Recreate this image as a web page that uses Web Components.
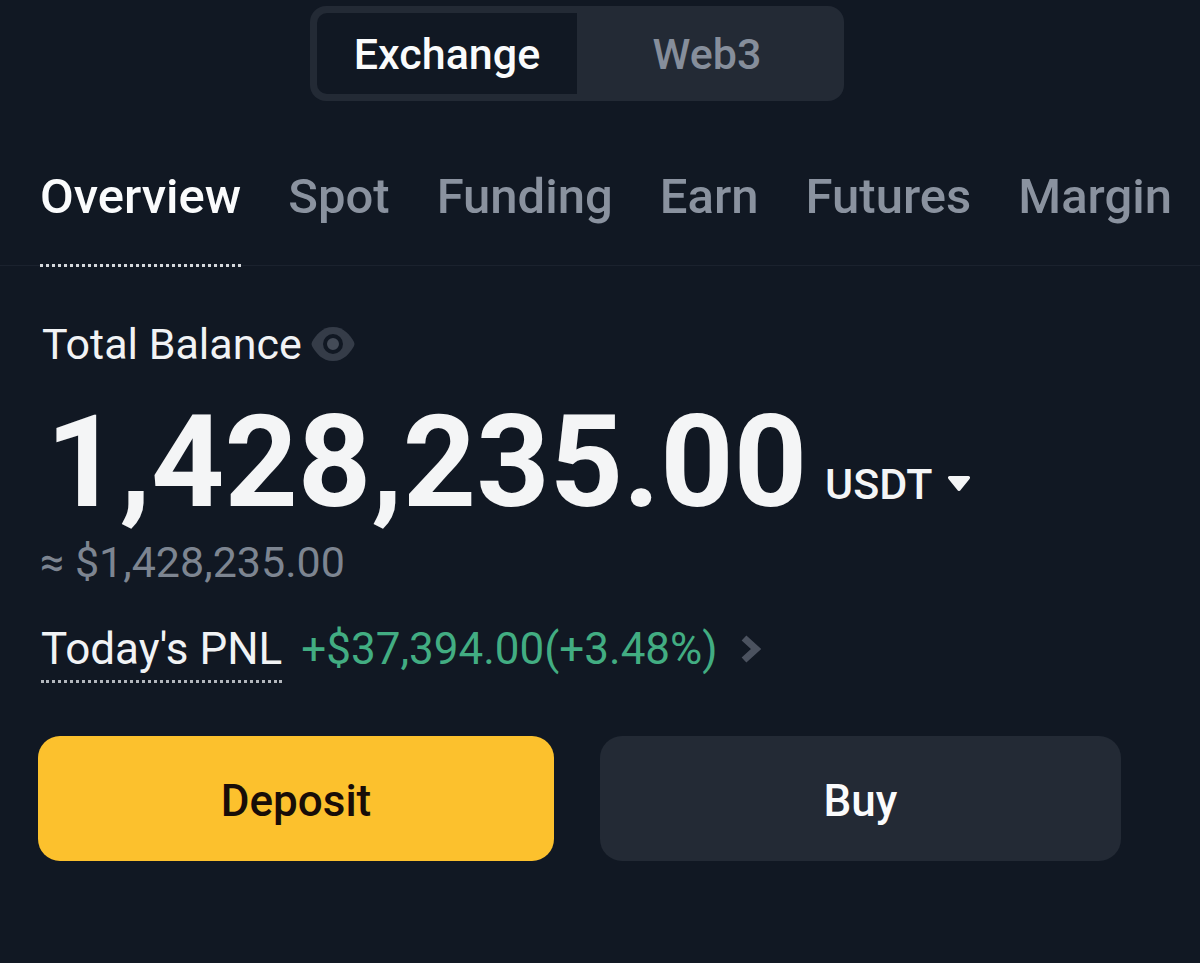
<!DOCTYPE html>
<html lang="en">
<head>
<meta charset="utf-8">
<meta name="viewport" content="width=device-width, initial-scale=1">
<title>Wallet Overview</title>
<style>
  html { background: #111823; }
  body { margin: 0; font-family: Roboto, "Liberation Sans", sans-serif; color: #f1f3f5; }
</style>
</head>
<body>
<wallet-page>
  <segment-switch slot="switch">
    <segment-item active>Exchange</segment-item>
    <segment-item>Web3</segment-item>
  </segment-switch>
  <tab-bar slot="tabs">
    <tab-link active>Overview</tab-link>
    <tab-link>Spot</tab-link>
    <tab-link>Funding</tab-link>
    <tab-link>Earn</tab-link>
    <tab-link>Futures</tab-link>
    <tab-link>Margin</tab-link>
  </tab-bar>
  <balance-summary>
    <span slot="label">Total Balance</span>
    <span slot="amount">1,428,235.00</span>
    <currency-select slot="currency"></currency-select>
    <span slot="fiat">≈ $1,428,235.00</span>
  </balance-summary>
  <pnl-row>
    <span slot="label">Today's PNL</span>
    <span slot="value">+$37,394.00(+3.48%)</span>
  </pnl-row>
  <action-row>
    <action-button variant="primary">Deposit</action-button>
    <action-button>Buy</action-button>
  </action-row>
</wallet-page>

<script>
  const define = (name, html) => {
    const template = document.createElement('template');
    template.innerHTML = html;
    customElements.define(name, class extends HTMLElement {
      constructor() {
        super();
        this.attachShadow({ mode: 'open' }).append(template.content.cloneNode(true));
      }
    });
  };

  define('wallet-page', `
    <style>
      :host { display: block; padding: 6px 0 101px; }
      header { display: flex; justify-content: center; padding: 0 84px 0 38px; }
      nav { margin-top: 60px; }
      main { padding: 50px 79px 0 38px; }
    </style>
    <header><slot name="switch"></slot></header>
    <nav aria-label="Wallet sections"><slot name="tabs"></slot></nav>
    <main><slot></slot></main>`);

  define('segment-switch', `
    <style>
      :host { display: grid; grid-template-columns: 1fr 1fr; flex: 0 1 534px; box-sizing: border-box;
              padding: 7px; border-radius: 16px; background: #232a35; }
    </style>
    <slot></slot>`);

  define('segment-item', `
    <style>
      :host { display: block; }
      button { width: 100%; height: 81px; padding: 0; border: 0; background: none; border-radius: 10px 0 0 10px;
               font: 500 43px/56px Roboto, "Liberation Sans", sans-serif; color: #868e9b; cursor: pointer; }
      :host([active]) button { background: #111823; color: #fafbfc; }
    </style>
    <button type="button"><slot></slot></button>`);

  define('tab-bar', `
    <style>
      :host { display: flex; justify-content: space-between; padding: 0 28px 0 40px; border-bottom: 1px solid #1b222e; }
    </style>
    <slot></slot>`);

  define('tab-link', `
    <style>
      :host { display: block; margin-bottom: -2px; }
      a { display: block; padding-bottom: 31px; border-bottom: 3px dotted transparent;
          font-size: 49px; font-weight: 500; line-height: 72px; color: #8a929f; text-decoration: none; white-space: nowrap; }
      :host([active]) a { color: #fafbfc; border-color: #d5d8dc; }
    </style>
    <a href="#"><slot></slot></a>`);

  define('balance-summary', `
    <style>
      :host { display: block; }
      .label { display: flex; align-items: center; gap: 9px; padding-left: 4px; font-size: 43px; line-height: 56px; }
      button { display: flex; padding: 0; border: 0; background: none; cursor: pointer; }
      .total { display: flex; align-items: flex-end; gap: 18px; margin-top: 30px; padding-left: 8px; }
      .amount { font-size: 128px; font-weight: 700; line-height: 120px; color: #f4f5f6; }
      .fiat { margin-top: 12px; padding-left: 2px; font-size: 43px; line-height: 56px; color: #7d8591; }
    </style>
    <div class="label">
      <slot name="label"></slot>
      <button type="button" aria-label="Hide balance">
        <svg width="44" height="34" viewBox="0 0 44 34" aria-hidden="true">
          <path d="M22 0C33 0 39 8 43 15Q44 17 43 19C39 26 33 34 22 34S5 26 1 19Q0 17 1 15C5 8 11 0 22 0Z" fill="#353c48"/>
          <circle cx="22" cy="17" r="8" fill="#444b57" stroke="#111823" stroke-width="4"/>
        </svg>
      </button>
    </div>
    <div class="total">
      <span class="amount"><slot name="amount"></slot></span>
      <slot name="currency"></slot>
    </div>
    <div class="fiat"><slot name="fiat"></slot></div>`);

  define('currency-select', `
    <style>
      :host { display: inline-grid; align-items: center; padding-bottom: 10px; }
      select { grid-area: 1 / 1; appearance: none; margin: 0; padding: 0 38px 0 0; border: 0; background: none;
               font: 500 43px/56px Roboto, "Liberation Sans", sans-serif; color: #f4f5f6; }
      svg { grid-area: 1 / 1; justify-self: end; pointer-events: none; }
    </style>
    <select aria-label="Display currency"><option>USDT</option></select>
    <svg width="24" height="18" viewBox="0 0 24 18" aria-hidden="true">
      <path d="M2.5 1H21.5Q24 1.500 22.500 4L14 14.500Q12 17.500 10 14.500L1.500 4Q0 1.500 2.500 1Z" fill="#f4f5f6"/>
    </svg>`);

  define('pnl-row', `
    <style>
      :host { display: flex; align-items: flex-start; gap: 19px; margin-top: 31px; padding-left: 3px;
              font-size: 44px; line-height: 56px; }
      button { padding: 0 0 3px; border: 0; border-bottom: 3px dotted #b4b8be; background: none;
               font: inherit; color: #f1f3f5; cursor: help; }
      a { display: flex; align-items: center; gap: 23px; color: #42ad82; text-decoration: none; }
    </style>
    <button type="button"><slot name="label"></slot></button>
    <a href="#">
      <slot name="value"></slot>
      <svg width="20" height="28" viewBox="0 0 20 28" aria-hidden="true">
        <path d="M3 3L15 14L3 25" fill="none" stroke="#4b525f" stroke-width="7"/>
      </svg>
    </a>`);

  define('action-row', `
    <style>
      :host { display: grid; grid-template-columns: 516fr 521fr; gap: 46px; margin-top: 53px; }
    </style>
    <slot></slot>`);

  define('action-button', `
    <style>
      :host { display: block; }
      button { width: 100%; height: 125px; padding: 4px 0 0; border: 0; border-radius: 22px; background: #232a35; color: #fafbfc;
               font: 500 44px/56px Roboto, "Liberation Sans", sans-serif; cursor: pointer; }
      :host([variant="primary"]) button { background: #fcc12d; color: #180d08; }
    </style>
    <button type="button"><slot></slot></button>`);
</script>
</body>
</html>
